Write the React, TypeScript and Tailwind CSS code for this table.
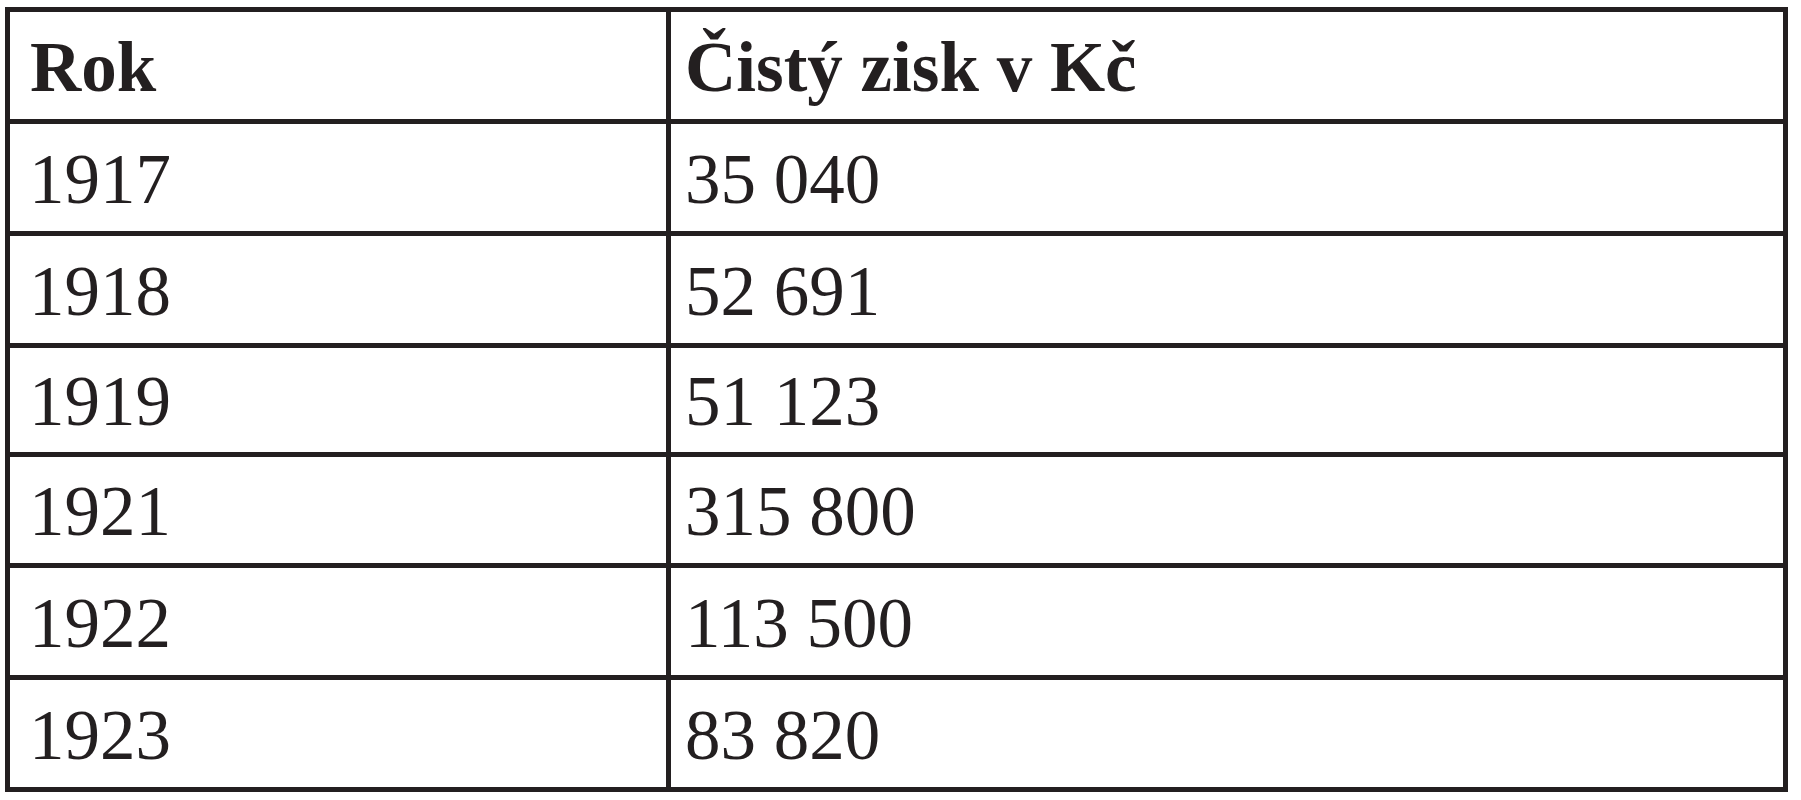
import React from "react";

const rows: { year: string; value: string; h: string }[] = [
  { year: "1917", value: "35 040", h: "h-[112px]" },
  { year: "1918", value: "52 691", h: "h-[112px]" },
  { year: "1919", value: "51 123", h: "h-[109px]" },
  { year: "1921", value: "315 800", h: "h-[111px]" },
  { year: "1922", value: "113 500", h: "h-[112px]" },
  { year: "1923", value: "83 820", h: "h-[112px]" },
];

export default function App() {
  return (
    <div
      className="w-[1801px] h-[800px] bg-white pt-[7px] pl-[5px] text-[#231f20]"
      style={{ fontFamily: '"Liberation Serif", "Times New Roman", serif' }}
    >
      <div className="w-[1783px] border-[5px] border-[#231f20] flex flex-col">
        <div className="flex h-[107px]">
          <div className="w-[661px] shrink-0 border-r-[5px] border-[#231f20] flex items-center pt-[3px] pl-[20px] text-[71px] leading-none font-bold">
            Rok
          </div>
          <div className="flex-1 flex items-center pt-[3px] pl-[14px] text-[71px] leading-none font-bold">
            Čistý zisk v Kč
          </div>
        </div>
        {rows.map((r) => (
          <div key={r.year} className={`flex border-t-[5px] border-[#231f20] ${r.h}`}>
            <div className="w-[661px] shrink-0 border-r-[5px] border-[#231f20] flex items-center pt-[3px] pl-[19px] text-[71px] leading-none">
              {r.year}
            </div>
            <div className="flex-1 flex items-center pt-[3px] pl-[14px] text-[71px] leading-none">
              {r.value}
            </div>
          </div>
        ))}
      </div>
    </div>
  );
}
